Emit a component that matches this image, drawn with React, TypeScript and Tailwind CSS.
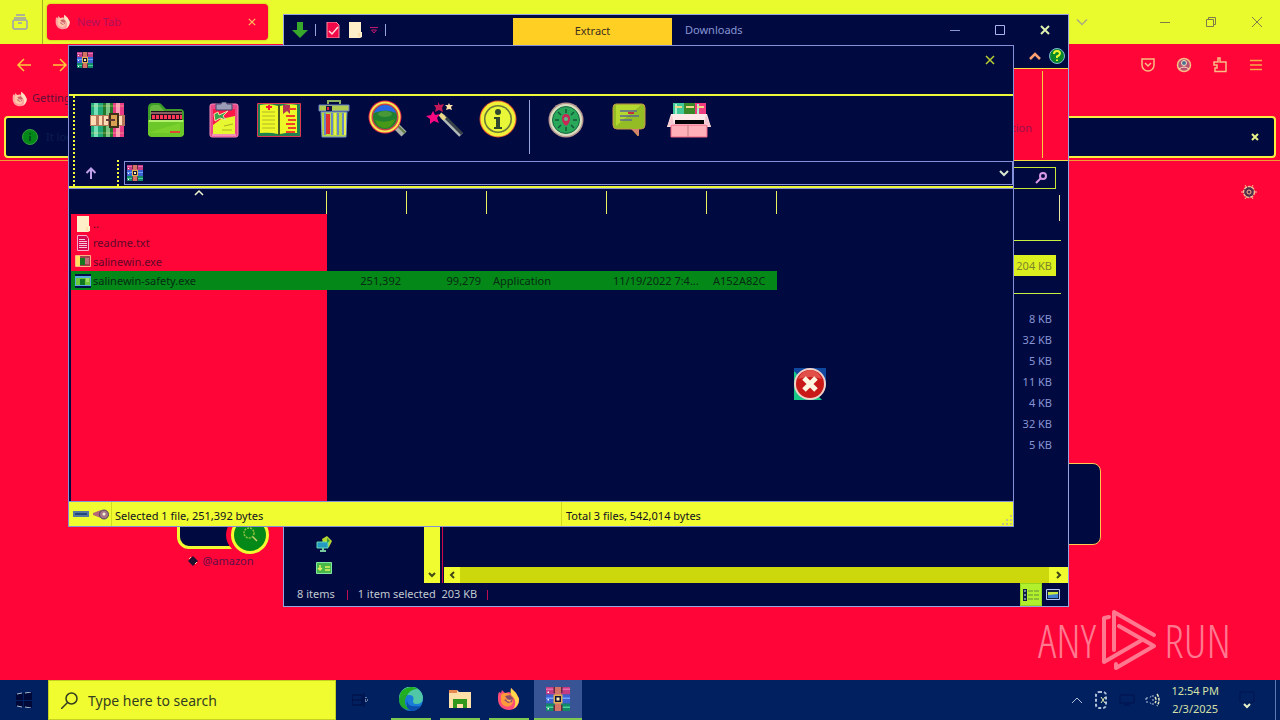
import type { ReactNode } from "react";

type IconProps = { className?: string };

function Svg({ w, h, className = "", children }: { w: number; h: number; className?: string; children: ReactNode }) {
  return (
    <svg width={w} height={h} viewBox={`0 0 ${w} ${h}`} className={`block shrink-0 ${className}`} fill="none" aria-hidden="true">
      {children}
    </svg>
  );
}

function Firefox({ size = 16, pale = false }: { size?: number; pale?: boolean }) {
  return (
    <svg width={size} height={size} viewBox="0 0 24 24" fill="none" className="block shrink-0" aria-hidden="true">
      <path d="M2 5l2 1 1-3 3 3 4-1 2 1V1l5 5 3 5c1 7-4 12-10 12S1 19 1 12c0-3 0-5 1-7z" fill={pale ? "#ffa0a0" : "#ff4c78"} />
      <path d="M14 1l5 5 3 6c0 4-2 8-6 10 3-4 3-9 0-12-2-2-3-4-2-9z" fill={pale ? "#ffe3c0" : "#ffd94a"} />
      <path d="M4 8c3-3 7-2 10 0 3 3 3 9-1 11-5 2-9-2-9-5z" fill={pale ? "#ffc9a8" : "#ff9a3c"} />
      <path d="M8 9l5-1 3 3-1 4-4 1-4-3 3-1z" fill={pale ? "#d06468" : "#8a4a68"} />
      <path d="M9 12l4 1 2-1-2 3-3-1z" fill={pale ? "#ffd8c8" : "#ffb060"} />
    </svg>
  );
}

function Books({ size = 16 }: { size?: number }) {
  return (
    <svg width={size} height={size} viewBox="0 0 16 16" className="block shrink-0" aria-hidden="true">
      <rect width="16" height="5" fill="#c43c84" />
      <rect y="5" width="16" height="6" fill="#3c62d4" />
      <rect y="11" width="16" height="5" fill="#128a68" />
      <path d="M0 1h5v1H0zM11 1h5v1h-5z" fill="#e86cb0" />
      <path d="M0 7h5v1H0zM11 7h5v1h-5z" fill="#72a4ff" />
      <path d="M0 13h5v1H0zM11 13h5v1h-5z" fill="#4cd09c" />
      <path d="M1 3h1v1H1zM1 8h1v1H1zM1 14h1v1H1z" fill="#fff" />
      <rect x="6" width="4" height="16" fill="#d47464" />
      <path d="M5 5h6v6H5z" fill="#e0b050" />
      <path d="M6 6h4v4H6z" fill="#101038" />
      <path d="M7 7h2v2H7z" fill="#fff0b0" />
      <path d="M5 0h1v4H5zM10 0h1v4h-1zM5 12h1v4H5zM10 12h1v4h-1z" fill="#642a44" />
    </svg>
  );
}

const Close = ({ className = "" }: IconProps) => (
  <Svg w={10} h={10} className={className}><path d="M1 1l8 8M9 1L1 9" stroke="currentColor" strokeWidth="1.5" /></Svg>
);
const Down = ({ className = "" }: IconProps) => (
  <Svg w={12} h={8} className={className}><path d="M1 1.500l5 5 5-5" stroke="currentColor" strokeWidth="1.500" /></Svg>
);

function AddIcon() {
  return (
    <Svg w={36} h={36}>
      <rect x="1" y="1" width="12" height="34" fill="#20a878" /><rect x="4" y="1" width="4" height="34" fill="#78e0b8" />
      <rect x="13" y="1" width="10" height="34" fill="#207828" /><rect x="16" y="1" width="4" height="34" fill="#7cc484" />
      <rect x="23" y="1" width="11" height="34" fill="#e83c84" /><rect x="26" y="1" width="4" height="34" fill="#ff9cb8" />
      <path d="M1 4h33M1 31h33" stroke="#f4d884" strokeOpacity=".5" />
      <rect y="13" width="35" height="11" fill="#b8785c" />
      <path d="M1 14h5v9H1zM9 14h3v9H9zM14 14h4v9h-4zM28 14h4v9h-4z" fill="#ffdcb4" />
      <rect x="20" y="12" width="8" height="13" stroke="#3c3018" strokeWidth="2" fill="#d8a050" />
      <path d="M16 18h9" stroke="#603838" strokeWidth="2" />
    </Svg>
  );
}
function ExtractIcon() {
  return (
    <Svg w={38} h={36}>
      <path d="M1 6q0-5 5-5h6q2 0 4 3l3 3h14q4 0 4 4v22H1z" fill="#3c9c28" />
      <path d="M3 7q0-4 4-4h5l6 7v8H3z" fill="#64b840" />
      <rect x="4" y="9" width="31" height="10" fill="#201020" />
      <path d="M4 11h31" stroke="#f0b0a0" />
      <path d="M5 15h30" stroke="#ff3858" strokeWidth="4" strokeDasharray="3 1" />
      <path d="M1 18h36v13q0 4-4 4H5q-4 0-4-4z" fill="#6cc828" />
      <path d="M2 19h34" stroke="#b4f070" strokeWidth="2" />
      <path d="M3 30l30-9v10H4z" fill="#8cdc30" opacity=".5" />
      <path d="M23 30h10" stroke="#e04830" strokeWidth="2" />
    </Svg>
  );
}
function TestIcon() {
  return (
    <Svg w={30} h={36}>
      <rect x="1" y="2" width="28" height="33" rx="2" fill="#e84888" stroke="#ff8cb8" />
      <rect x="4" y="7" width="22" height="25" fill="#e8f830" />
      <path d="M4 7h22v7l-14 3-8 6z" fill="#ff1848" />
      <path d="M7 2h5l1-2h4l1 2h5v6H7z" fill="#9c9cb8" stroke="#404468" />
      <path d="M5 12l4-2 1 3 9-4-5 5 3 4-6-2-5 3z" fill="#38a450" stroke="#ffd8a0" />
      <path d="M15 24l9-2M13 28h10" stroke="#a8b020" />
      <path d="M3 33h24" stroke="#ffd8e8" />
    </Svg>
  );
}
function ViewIcon() {
  return (
    <Svg w={44} h={36}>
      <path d="M.5 1.500h43v33H.5z" fill="#208050" stroke="#e03850" />
      <path d="M3 3q10-2 18 1v28q-8-2-18-1zM23 4q9-3 17-1v28q-9-1-17 1z" fill="#eef828" />
      <path d="M5 10h13M5 14h13M5 18h13M5 22h13M5 26h13" stroke="#b0b820" />
      <path d="M22 3v30" stroke="#485820" strokeWidth="2" />
      <path d="M12 3v5M9 5h6" stroke="#ff1830" strokeWidth="2" />
      <path d="M26 3h7v9l-3-3-4 3z" fill="#b43454" />
      <path d="M32 7h7M29 14h9M31 18h8M29 22h9M31 26h8M29 30h9" stroke="#f04028" strokeWidth="2" />
    </Svg>
  );
}
function DeleteIcon() {
  return (
    <Svg w={32} h={38}>
      <path d="M10 4V1h12v3" stroke="#88b060" strokeWidth="2" />
      <path d="M1 5h30v6H1z" fill="#b0cc50" stroke="#6880c8" />
      <path d="M8 6h6v5H8z" fill="#101440" /><path d="M9 7h2v3H9z" fill="#e82848" />
      <path d="M3 12h26l-1 25H4z" fill="#b8d840" stroke="#7090d0" />
      <path d="M7 13v22M14 13v22M20 13v22M25 13v22" stroke="#6888c8" strokeWidth="2" />
      <path d="M10 14v20" stroke="#e03030" strokeWidth="4" /><path d="M17 13v22M27 13v22" stroke="#e8f050" strokeWidth="2" />
    </Svg>
  );
}
function FindIcon() {
  return (
    <Svg w={40} h={38}>
      <path d="M27 25l9 9" stroke="#a8b0a8" strokeWidth="7" /><path d="M28 24l9 9" stroke="#608048" strokeWidth="2" />
      <circle cx="17" cy="17" r="16.500" fill="#e82848" /><circle cx="17" cy="17" r="15.500" fill="#f8e850" />
      <circle cx="17" cy="17" r="13.500" fill="#d04048" /><circle cx="17" cy="17" r="12" fill="#208030" />
      <path d="M6 13q3-8 11-8t11 8q-10-5-22 0z" fill="#2868e8" /><path d="M7 20q10 4 20-1-3 9-10 9t-10-8z" fill="#489818" />
      <ellipse cx="17" cy="14" rx="7" ry="3" fill="#489838" />
    </Svg>
  );
}
function WizardIcon() {
  return (
    <Svg w={38} h={36}>
      <path d="M16 14L35 33" stroke="#b0b8b8" strokeWidth="5" /><path d="M18 14l18 18" stroke="#384048" strokeWidth="3" />
      <path d="M14 12l5 5" stroke="#e8d888" strokeWidth="4" />
      <path d="M7 9l2 4 5-1-3 4 2 5-5-2-4 3v-5l-4-3 5-1z" fill="#f80880" />
      <path d="M12 0l2 3 4-1-2 4 1 4-4-2-4 2 1-4-2-3h4z" fill="#c41858" />
      <path d="M23 1l1 2h3l-2 2 1 3-3-1-3 1 1-3-2-2h3z" fill="#ffe0a8" />
    </Svg>
  );
}
function InfoIcon() {
  return (
    <Svg w={38} h={38}>
      <circle cx="19" cy="19" r="18.500" fill="#e85830" /><circle cx="19" cy="19" r="17.500" fill="#f0f038" />
      <circle cx="19" cy="19" r="14" fill="#687838" /><circle cx="19" cy="19" r="12.500" fill="#e8f838" />
      <circle cx="19" cy="12" r="3" fill="#304830" /><path d="M15 17h6v10h2v2h-8v-2h2v-8h-2z" fill="#304830" />
    </Svg>
  );
}
function ScanIcon() {
  return (
    <Svg w={36} h={36}>
      <circle cx="18" cy="18" r="17.500" fill="#b89890" /><circle cx="18" cy="18" r="16" fill="#d8e0c0" />
      <circle cx="18" cy="18" r="13.500" fill="#28a858" stroke="#186848" />
      <path d="M18 7v4M18 25v4M7 18h4M25 18h4M10 10l3 3M26 10l-3 3M10 26l3-3M26 26l-3-3" stroke="#105838" strokeWidth="1.500" />
      <path d="M14 17q0-5 4-5t4 5q0 4-4 7-4-3-4-7z" fill="#c82858" /><circle cx="18" cy="17" r="2" fill="#60b888" />
    </Svg>
  );
}
function CommentIcon() {
  return (
    <Svg w={34} h={36}>
      <path d="M4 2h26q3 0 3 4v17q0 4-4 4h-3v7l-6-7H5q-4 0-4-4V6q0-4 3-4z" fill="#94bc24" stroke="#c89848" />
      <path d="M4 3h25L4 24z" fill="#b4d830" /><path d="M19 27h8v7z" fill="#d88070" />
      <path d="M8 9h17M8 14h19M8 18h12" stroke="#586890" strokeWidth="1.500" /><path d="M16 11h6" stroke="#c83038" strokeWidth="2" />
    </Svg>
  );
}
function SfxIcon() {
  return (
    <Svg w={44} h={36}>
      <rect x="6" y="1" width="11" height="15" fill="#40c898" /><rect x="17" y="1" width="11" height="15" fill="#388828" /><rect x="28" y="1" width="11" height="15" fill="#f03c80" />
      <path d="M9 2v10M31 2v10" stroke="#a8f0d0" strokeWidth="2" /><path d="M8 5h7M19 5h8M30 5h7" stroke="#f0d888" strokeWidth="2" />
      <path d="M4 12h36l4 13H0z" fill="#ffe8e8" /><path d="M8 18h29v4H8z" fill="#040408" />
      <path d="M4 23h36v12H4z" fill="#ffb0b8" stroke="#f06080" /><path d="M0 25l5-12 2 9zM44 25l-5-12-2 9z" fill="#f8c8d0" />
      <path d="M21 23v12" stroke="#c08088" />
    </Svg>
  );
}

const FilePage = () => <Svg w={14} h={16}><path d="M1 0h12v10h1v5l-2 1H1z" fill="#ffefc8" /><path d="M11 11v4" stroke="#ffd090" /></Svg>;
const TextFile = () => <Svg w={14} h={16}><path d="M1.500.5h9l2 3v12h-11z" fill="#d80850" stroke="#f4b0cc" /><path d="M3 4.500h6M3 6.500h8M3 8.500h8M3 10.500h8M3 12.500h8" stroke="#f8c8d8" /></Svg>;
const ExeRed = () => <Svg w={16} h={13}><path d="M.5.5h15v11H.5z" fill="#a04050" stroke="#ffb080" /><path d="M1 1h4v10H1z" fill="#ffe060" /><path d="M5 3h5v7H5z" fill="#187820" /><path d="M10 4h4M10 6h4M10 8h4" stroke="#e098a0" /></Svg>;
const ExeGreen = () => <Svg w={16} h={14}><path d="M0 0h16v14H0z" fill="#00104a" /><path d="M0 2h16v10H0z" fill="#58a8e0" /><path d="M1 4h14v7H1z" fill="#6cc838" /><path d="M5 5h5v6H5z" fill="#107820" /><path d="M11 5h3M11 7h3" stroke="#d0f090" /></Svg>;

function Browser() {
  return (
    <main className="absolute inset-0 flex flex-col bg-[#ff0538] text-[#8c1240]">
      <header className="flex h-11 shrink-0 items-center bg-[#e9fb2d] text-[#7c7c48]">
        <button aria-label="Recent browsing" className="flex h-full w-[43px] items-center justify-center border-r border-[#a0b020] pr-0.5 text-[#9a9cb4]">
          <Svg w={16} h={16}><path d="M4 1h9M2 4h12" stroke="currentColor" strokeWidth="1.500" /><rect x="1" y="6" width="14" height="9" rx="1.500" stroke="currentColor" strokeWidth="1.500" /><path d="M6 9h4" stroke="currentColor" strokeWidth="1.500" /></Svg>
        </button>
        <div className="ml-1 flex h-9 w-[221px] items-center rounded bg-[#ff0538] px-2 shadow-[0_0_2px_#c09020]">
          <Firefox pale />
          <span className="ml-1.5 flex-1 text-[11px] text-[#b01058]">New Tab</span>
          <button aria-label="Close tab" className="mr-1 text-[#ffc060]"><Close className="h-2 w-2" /></button>
        </div>
        <div className="ml-auto flex items-center">
          <button aria-label="List tabs" className="mr-[54px] text-[#a8ac80]"><Down /></button>
          <button aria-label="Minimize" className="flex w-[46px] justify-center"><Svg w={10} h={10}><path d="M0 5.500h10" stroke="currentColor" /></Svg></button>
          <button aria-label="Restore" className="flex w-[46px] justify-center"><Svg w={10} h={10}><path d="M.5 2.500h7v7h-7zM2.500 2.500v-2h7v7h-2" stroke="currentColor" /></Svg></button>
          <button aria-label="Close" className="flex w-[46px] justify-center"><Svg w={10} h={10}><path d="M0 0l10 10M10 0L0 10" stroke="currentColor" /></Svg></button>
        </div>
      </header>
      <nav className="flex h-[41px] shrink-0 items-center px-4 text-[#ffc83c]">
        <button aria-label="Back"><Svg w={16} h={16}><path d="M15 8H2M8 2L2 8l6 6" stroke="currentColor" strokeWidth="1.500" /></Svg></button>
        <button aria-label="Forward" className="ml-5"><Svg w={16} h={16}><path d="M1 8h13M8 2l6 6-6 6" stroke="currentColor" strokeWidth="1.500" /></Svg></button>
        <div className="ml-auto flex gap-5 text-[#f8bc84]">
          <button aria-label="Save to Pocket"><Svg w={16} h={16}><path d="M2 2h12v6a6 6 0 0 1-12 0z" stroke="currentColor" strokeWidth="1.500" /><path d="M5 6l3 3 3-3" stroke="currentColor" strokeWidth="1.500" /></Svg></button>
          <button aria-label="Account"><Svg w={16} h={16}><circle cx="8" cy="8" r="6.500" stroke="currentColor" strokeWidth="1.500" fill="#b85070" /><circle cx="8" cy="6" r="2.500" stroke="#ffe0c0" fill="#487090" /><path d="M3 12q5-4 10 0" stroke="#ffe0c0" /></Svg></button>
          <button aria-label="Extensions"><Svg w={16} h={16}><path d="M3 14.500v-3.500h2V8H2V5h4V1h2v4h6v9.500z" stroke="currentColor" strokeWidth="1.500" /></Svg></button>
          <button aria-label="Menu"><Svg w={16} h={16}><path d="M2 3.500h12M2 8h12M2 12.500h12" stroke="#f8a848" strokeWidth="1.500" /></Svg></button>
        </div>
      </nav>
      <div className="flex h-[31px] shrink-0 items-center pb-1 pl-3 text-[11px] text-[#601038]"><Firefox pale /><a href="#started" className="ml-1">Getting Started</a></div>
      <div className="mx-1 flex h-[42px] shrink-0 items-center rounded border-2 border-[#f8f040] bg-[#000a40] pl-4 pr-[15px] text-[11px] text-[#0c1c50]">
        <Svg w={16} h={16}><circle cx="8" cy="8" r="7.500" fill="#048818" stroke="#38a040" /><path d="M8 4v1.500M8 7v5" stroke="#06401c" strokeWidth="1.500" /></Svg>
        <span className="ml-2 flex-1">It looks like you haven’t started Firefox in a while.</span>
        <button aria-label="Dismiss" className="text-[#e8f088]"><Svg w={8} h={8}><path d="M1 1l6 6M7 1L1 7" stroke="currentColor" strokeWidth="2" /></Svg></button>
      </div>
      <div className="mt-0.5 h-px shrink-0 bg-[#f0a030]" />
      <div className="relative flex-1">
        <button aria-label="Personalize" className="absolute right-[23px] top-[23px] text-[#f8b890]">
          <Svg w={16} h={16}><circle cx="8" cy="8" r="5.500" fill="#50304c" stroke="currentColor" strokeWidth="1.500" strokeDasharray="3 1" /><circle cx="8" cy="8" r="2" stroke="currentColor" /><path d="M0 8h3M13 8h3M4 1l2 3M12 1l-2 3M4 15l2-3M12 15l-2-3" stroke="currentColor" /></Svg>
        </button>
        <div className="absolute left-[901px] top-[302px] h-[82px] w-[200px] rounded-lg border border-[#ffc850] bg-[#000a40]" />
        <div className="absolute left-[177px] top-[308px] flex flex-col items-center">
          <div className="relative h-20 w-[82px] rounded-xl border-[3px] border-[#f0fc30] bg-[#000a40]">
            <div className="absolute -bottom-2 -right-[13px] flex h-[38px] w-[38px] items-center justify-center rounded-full border-[3px] border-[#f0fc30] bg-[#048818] shadow-[-5px_0_0_#ff0538]">
              <Svg w={16} h={16}><circle cx="7" cy="6" r="5" stroke="#90c040" strokeWidth="1.500" strokeDasharray="2 1" /><path d="M11 10l4 4" stroke="#d0d070" strokeWidth="1.500" /></Svg>
            </div>
          </div>
          <a href="#amazon" className="ml-1.5 mt-1 flex items-center gap-1 text-[11px] text-[#601048]">
            <Svg w={10} h={10}><path d="M5 0l5 5-5 5-5-5z" fill="#201030" /><path d="M1 3l2-2M7 8l2-2" stroke="#f8d0a0" /></Svg>@amazon
          </a>
        </div>
      </div>
    </main>
  );
}

const sizes = ["8 KB", "32 KB", "5 KB", "11 KB", "4 KB", "32 KB", "5 KB"];

function Explorer() {
  return (
    <section aria-label="Downloads" className="absolute left-[283px] top-[14px] flex h-[593px] w-[786px] flex-col border border-[#98a4e0] bg-[#000a40] text-[#8894d4]">
      <header className="flex h-[30px] shrink-0 items-center pl-2">
        <Svg w={16} h={16}><path d="M5 0h6v8h5l-8 8-8-8h5z" fill="#38a82c" /></Svg>
        <span className="ml-[7px] h-3 w-px bg-[#98a4e0]" />
        <button aria-label="Properties" className="ml-2.5"><Svg w={14} h={16}><path d="M1 0h9l3 3v13H1z" fill="#f00848" stroke="#ff90a8" /><path d="M3 9l3 3 6-7" stroke="#ffd8d8" strokeWidth="1.500" /></Svg></button>
        <button aria-label="New folder" className="ml-2"><FilePage /></button>
        <button aria-label="Customize toolbar" className="ml-2 text-[#c01870]"><Svg w={8} h={8}><path d="M0 1.500h8M1.500 4L4 7l2.500-3z" stroke="currentColor" /></Svg></button>
        <span className="ml-[7px] h-3 w-px bg-[#98a4e0]" />
        <button className="ml-[127px] h-[27px] w-[159px] self-end bg-[#ffcf24] text-[11px] text-[#3c3020]">Extract</button>
        <h1 className="ml-[13px] flex-1 text-[11px]">Downloads</h1>
        <button aria-label="Minimize" className="flex w-[45px] justify-center"><Svg w={10} h={10}><path d="M0 5.500h10" stroke="currentColor" /></Svg></button>
        <button aria-label="Maximize" className="flex w-[45px] justify-center"><Svg w={10} h={10}><path d="M.5.5h9v9h-9z" stroke="#a8b4f0" /></Svg></button>
        <button aria-label="Close" className="flex w-[46px] justify-center text-[#e0f0b0]"><Svg w={10} h={10}><path d="M1 1l8 8M9 1L1 9" stroke="currentColor" strokeWidth="2" /></Svg></button>
      </header>
      <div className="flex h-[23px] shrink-0 items-center justify-end gap-2 pb-0.5 pr-[3px]">
        <button aria-label="Collapse ribbon"><Svg w={12} h={8}><path d="M1 7l5-5 5 5" stroke="#ffa070" strokeWidth="2.500" /></Svg></button>
        <button aria-label="Help"><Svg w={16} h={16}><circle cx="8" cy="8" r="7.500" fill="#088828" stroke="#80b8d8" /><path d="M5 6q0-3 3-3t3 2.500q0 1.500-3 3V10M8 11.500V13" stroke="#e8f830" strokeWidth="2" /></Svg></button>
      </div>
      <div className="flex h-[93px] shrink-0 items-center justify-end border-y border-[#f4e040] bg-[#ff0538] py-0.5 pr-[25px]">
        <span className="mr-2.5 mt-[28px] text-[11px] text-[#98104c]">Navigation</span>
        <span className="h-full w-px bg-[#f4d040]" />
      </div>
      <div className="flex h-[34px] shrink-0 items-start justify-end pr-3 pt-1.5">
        <label className="flex h-[22px] w-44 items-center border border-[#c8e838] pr-2">
          <input aria-label="Search Downloads" className="w-full bg-transparent" />
          <Svg w={12} h={12}><circle cx="8" cy="4" r="3" stroke="#d898e8" strokeWidth="2" /><path d="M6 6l-5 5" stroke="#d898e8" strokeWidth="2" /></Svg>
        </label>
      </div>
      <div className="flex min-h-0 flex-1">
        <div className="flex w-[140px] flex-col items-center justify-end gap-2.5 pb-[9px] pr-[60px]">
          <Svg w={16} h={16}><path d="M6 3l5-3 5 5-3 6H8z" fill="#b8d830" /><path d="M1 6h11v6H1z" fill="#2498c0" stroke="#60d8b0" /><path d="M4 15h6M7 12v3" stroke="#78c8a0" strokeWidth="2" /><path d="M11 2l3 3-3 2z" fill="#38983c" /></Svg>
          <Svg w={16} h={12}><path d="M.5.5h15v11H.5z" fill="#48b848" stroke="#80e8a0" /><path d="M4 3v4M2 6l2 2 2-2M9 5h5M9 8h5" stroke="#e0f060" strokeWidth="1.500" /></Svg>
        </div>
        <div className="flex w-4 flex-col justify-end bg-[#f0fc30] text-[#404818]"><button aria-label="Scroll down" className="flex h-4 items-center justify-center"><Svg w={8} h={8}><path d="M1 2l3 3 3-3" stroke="currentColor" strokeWidth="2" /></Svg></button></div>
        <div className="ml-0.5 flex min-w-0 flex-1 flex-col border-l border-[#d00848]">
          <div className="mr-2 h-[26px] shrink-0 border-r border-[#e8e8a0]" />
          <div className="mr-[7px] mt-[19px] border-t border-[#c8f040]" />
          <ul className="mr-3 mt-3.5 text-right text-[11px] leading-[21px]">
            <li className="bg-[#dcf020] pr-1 text-[#7c8428]">204 KB</li>
          </ul>
          <div className="mr-[7px] mt-[17px] border-t border-[#c8f040]" />
          <ul className="mr-3 mt-3.5 flex-1 text-right text-[11px] leading-[21px]">
            {sizes.map((s, i) => <li key={i} className="pr-1">{s}</li>)}
          </ul>
          <div className="ml-px flex h-4 shrink-0 items-center bg-[#f0fc30] text-[#404818]">
            <button aria-label="Scroll left" className="flex h-4 w-4 items-center justify-center"><Svg w={8} h={8}><path d="M6 1L3 4l3 3" stroke="currentColor" strokeWidth="2" /></Svg></button>
            <div className="h-full flex-1 bg-[#ccd80c]" />
            <button aria-label="Scroll right" className="flex h-4 w-[19px] items-center justify-center"><Svg w={8} h={8}><path d="M2 1l3 3-3 3" stroke="currentColor" strokeWidth="2" /></Svg></button>
          </div>
        </div>
      </div>
      <footer className="flex h-[23px] shrink-0 items-center pl-[13px] text-[11px] text-[#c0c8d0]">
        <span>8 items</span>
        <span className="ml-3 h-2.5 w-px bg-[#c00c50]" />
        <span className="ml-2.5 whitespace-pre">1 item selected  203 KB</span>
        <span className="ml-2.5 h-2.5 w-px bg-[#c00c50]" />
        <button aria-label="Details view" className="ml-auto flex h-full w-[22px] items-center justify-center border border-[#90d820] bg-[#b0f02c]"><Svg w={16} h={14}><path d="M0 1h4v4H0zM0 5h4v4H0zM0 9h4v4H0z" fill="#101c48" /><path d="M1 3h2M1 7h2M1 11h2" stroke="#d8f0f0" /><path d="M5 3h5M11 3h5M5 7h5M11 7h5M5 11h5M11 11h5" stroke="#688c38" /></Svg></button>
        <button aria-label="Thumbnail view" className="ml-1 mr-2"><Svg w={14} h={11}><path d="M.5.5h13v10H.5z" fill="#102040" stroke="#b8c8ff" /><path d="M2 3h10v3H2z" fill="#c8e840" /><path d="M2 6l10-1v4H2z" fill="#4080d0" /></Svg></button>
      </footer>
    </section>
  );
}

type Row = { icon: ReactNode; name: string; cells?: string[] };
const rows: Row[] = [
  { icon: <FilePage />, name: ".." },
  { icon: <TextFile />, name: "readme.txt" },
  { icon: <ExeRed />, name: "salinewin.exe" },
  { icon: <ExeGreen />, name: "salinewin-safety.exe", cells: ["251,392", "99,279", "Application", "11/19/2022 7:4...", "A152A82C"] },
];
const headings = ["Name", "Size", "Packed", "Type", "Modified", "CRC32"];

function Archive() {
  return (
    <section aria-label="Archive" className="absolute left-[68px] top-[45px] flex h-[482px] w-[946px] flex-col border border-[#8490d8] bg-[#000a40] text-[11px]">
      <header className="flex h-12 shrink-0 items-start justify-between pl-2 pr-[18px] pt-1.5">
        <Books />
        <button aria-label="Close" className="mt-[3px] text-[#b8d030]"><Close /></button>
      </header>
      <div className="flex h-[94px] shrink-0 border-y-2 border-[#ecf838]">
        <div className="ml-1 border-l-2 border-dotted border-[#f0f838]" />
        <div className="flex min-w-0 flex-1 flex-col">
          <div className="flex h-16 items-start pl-[15px] pt-1">
            <button aria-label="Add" className="mt-0.5"><AddIcon /></button>
            <button aria-label="Extract To" className="ml-[21px] mt-0.5"><ExtractIcon /></button>
            <button aria-label="Test" className="ml-6 mt-0.5"><TestIcon /></button>
            <button aria-label="View" className="ml-[18px] mt-0.5"><ViewIcon /></button>
            <button aria-label="Delete" className="ml-[17px]"><DeleteIcon /></button>
            <button aria-label="Find" className="ml-[18px]"><FindIcon /></button>
            <button aria-label="Wizard" className="ml-[18px] mt-0.5"><WizardIcon /></button>
            <button aria-label="Info" className="ml-[15px]"><InfoIcon /></button>
            <span className="ml-[12px] h-[54px] w-px bg-[#98a4e0]" />
            <button aria-label="VirusScan" className="ml-[18px] mt-0.5"><ScanIcon /></button>
            <button aria-label="Comment" className="ml-7 mt-0.5"><CommentIcon /></button>
            <button aria-label="SFX" className="ml-[21px] mt-0.5"><SfxIcon /></button>
          </div>
          <div className="flex flex-1 items-stretch">
            <button aria-label="Up one level" className="flex w-[42px] items-center pl-[10px] text-[#c0a0e8]"><Svg w={12} h={12}><path d="M6 12V2M1.500 6L6 1.500 10.500 6" stroke="currentColor" strokeWidth="2" /></Svg></button>
            <div className="border-l-2 border-dotted border-[#f0f838]" />
            <label className="my-px ml-[5px] flex flex-1 items-center border border-[#8490d8] pl-0.5 pr-[3px]">
              <Books />
              <input aria-label="Archive path" className="h-4 flex-1 bg-transparent" />
              <span className="text-[#d8e8d0]"><Svg w={10} h={8}><path d="M1 2l4 4 4-4" stroke="currentColor" strokeWidth="2" /></Svg></span>
            </label>
          </div>
        </div>
      </div>
      <div className="min-h-0 flex-1 border-t border-[#8490d8] bg-[linear-gradient(#ff0538,#ff0538)] bg-[length:256px_100%] bg-[position:2px_0] bg-no-repeat">
        <table className="ml-0.5 w-[706px] table-fixed border-collapse text-left leading-[19px]">
          <colgroup><col className="w-[256px]" /><col className="w-20" /><col className="w-20" /><col className="w-[120px]" /><col className="w-[100px]" /><col className="w-[70px]" /></colgroup>
          <thead>
            <tr className="h-[25px] bg-[#000a40]">
              {headings.map((h, i) => (
                <th key={h} aria-label={h} className="relative p-0 align-top">
                  <span className="absolute bottom-0 right-0 top-0.5 w-px bg-[#e8f060]" />
                  {i === 0 && <Svg w={10} h={8} className="mx-auto"><path d="M1 6l4-4 4 4" stroke="#f0f8d0" strokeWidth="1.500" /></Svg>}
                </th>
              ))}
            </tr>
          </thead>
          <tbody>
            {rows.map((r) => (
              <tr key={r.name} className={r.cells ? "h-[19px] bg-[#048818] text-[#062c14]" : "h-[19px] text-[#600828]"}>
                <td className="p-0"><div className="flex h-[19px] items-center gap-0.5 pl-1"><span className="flex w-4 justify-center">{r.icon}</span>{r.name}</div></td>
                {r.cells?.map((c, i) => <td key={c} className={i < 2 ? "px-1.5 py-0 text-right" : "overflow-hidden whitespace-nowrap py-0 pl-1.5"}>{c}</td>)}
              </tr>
            ))}
          </tbody>
        </table>
      </div>
      <footer className="relative flex h-[25px] shrink-0 items-center border-t border-[#8490d8] bg-[#f0fc30] text-[#101020]">
        <div className="flex w-[42px] items-center gap-1 self-stretch pl-1">
          <Svg w={16} h={8}><path d="M0 1h16v6H0z" fill="#5478a0" /><path d="M2 3h12v2H2z" fill="#244878" /></Svg>
          <Svg w={16} h={11}><path d="M0 4l8-3v8L0 6z" fill="#b46878" /><circle cx="11" cy="5.500" r="4.500" fill="#a87888" stroke="#504060" /><circle cx="11" cy="5" r="1.500" fill="#f8f8d0" /></Svg>
        </div>
        <p className="flex w-[451px] items-center self-stretch border-x border-[#d0dc20] pl-[3px] pt-1">Selected 1 file, 251,392 bytes</p>
        <p className="pl-1 pt-1">Total 3 files, 542,014 bytes</p>
        <Svg w={12} h={12} className="absolute bottom-0 right-0"><path d="M9 1h2v2H9zM5 5h2v2H5zM9 5h2v2H9zM1 9h2v2H1zM5 9h2v2H5zM9 9h2v2H9z" fill="#c4c484" /></Svg>
      </footer>
    </section>
  );
}

function Watermark() {
  return (
    <div className="absolute bottom-2 right-[49px] flex h-[64px] items-center gap-1.5 font-['Open_Sans_Condensed_Light','Roboto_Condensed_Light','Roboto_Condensed','Liberation_Sans_Narrow',sans-serif] text-[46px] font-light leading-none text-[#ff7890]">
      <span>ANY</span>
      <Svg w={56} h={62}>
        <g stroke="#ff7890" strokeWidth="4" strokeLinecap="round" strokeLinejoin="round">
          <path d="M12 41V3l40 23M17 17l35 20L14 59v-4" /><path d="M7 8L2 9v44l38-22" />
        </g>
      </Svg>
      <span>RUN</span>
    </div>
  );
}

function Taskbar() {
  return (
    <footer className="flex h-10 shrink-0 items-center bg-[#002060]">
      <button aria-label="Start" className="flex h-full w-12 items-center justify-center"><Svg w={16} h={16}><path d="M0 2l7-1v7H0zM8 1l8-1v8H8zM0 9h7v6l-7-1zM8 9h8v7l-8-1z" fill="#000838" /><path d="M1 2l5-1M9 1l6-1M1 14l5 1M9 15l6 1" stroke="#a8b8d0" /></Svg></button>
      <label className="flex h-full w-[288px] items-center border border-[#c4d020] bg-[#f0fc30] pl-3 text-[#343c20]">
        <Svg w={17} h={17}><circle cx="10.500" cy="6.500" r="5.500" stroke="currentColor" strokeWidth="1.500" /><path d="M6.500 10.500L0 17" stroke="currentColor" strokeWidth="1.500" /></Svg>
        <input aria-label="Search" placeholder="Type here to search" className="ml-2.5 w-full bg-transparent text-[14px] outline-none placeholder:text-[#343c20]" />
      </label>
      <button aria-label="Task view" className="ml-4 mr-[23px] flex w-4 justify-center"><Svg w={16} h={16}><path d="M0 3h10v10H0zM0 8h10M12 1v14" stroke="#000c40" /><path d="M14 5v2M13 8h3M14 9v2" stroke="#d8d8e0" strokeDasharray="1 1" /></Svg></button>
      <button aria-label="Edge" className="flex h-full w-10 items-center justify-center border-b-2 border-[#7cc850]"><Svg w={24} h={24}>
        <circle cx="12" cy="12" r="12" fill="#187cd8" /><path d="M0 12A12 12 0 0 1 24 11q0 6-7 6-3 0-3-3 2-6-4-6Q2 8 0 12z" fill="#50c8a8" /><path d="M0 12Q1 1 12 0q4 0 7 2-7 0-10 5-6 0-9 5z" fill="#20b020" /><path d="M7 10q-4 9 6 13Q0 23 0 12q2-5 9-5z" fill="#20a828" /><path d="M8 12q-1 9 14 7-4 5-10 5-6-3-4-12z" fill="#0c50b0" />
      </Svg></button>
      <button aria-label="File Explorer" className="ml-[9px] flex h-full w-10 items-center justify-center border-b-2 border-[#7cc850]"><Svg w={22} h={20}><path d="M0 1h8l2 2h12v16H0z" fill="#ffe0a8" /><path d="M0 1h8v3H0z" fill="#e88850" /><path d="M4 19v-9h14v9h-4v-4H8v4z" fill="#30981c" /></Svg></button>
      <button aria-label="Firefox" className="ml-[9px] flex h-full w-10 items-center justify-center border-b-2 border-[#7cc850]"><Firefox size={24} /></button>
      <button aria-label="WinRAR" className="ml-[5px] flex h-full w-12 items-center justify-center border-b-2 border-[#7cc850] bg-[#385494]"><Books size={24} /></button>
      <div className="ml-auto flex h-full items-center text-[#b0c0d8]">
        <button aria-label="Show hidden icons"><Svg w={12} h={8}><path d="M1 7l5-5 5 5" stroke="currentColor" /></Svg></button>
        <span className="ml-3"><Svg w={12} h={18}><rect x="1" y="1" width="10" height="16" rx="3" stroke="currentColor" strokeWidth="2" strokeDasharray="3 2" /><path d="M6 6l4 6M10 6l-4 6" stroke="#e8f0b0" /></Svg></span>
        <span className="ml-3"><Svg w={16} h={12}><path d="M1 1h14v8H1zM5 11h6" stroke="#00124c" /></Svg></span>
        <span className="ml-2.5"><Svg w={16} h={14}><path d="M1 5h3l4-3v10l-4-3H1z" stroke="currentColor" strokeDasharray="2 2" /><path d="M10 4q2 3 0 6M12 1q4 6 0 12" stroke="#e0e8c0" strokeWidth="1.500" strokeDasharray="3 1" /></Svg></span>
        <p className="ml-2.5 text-center text-[11px] leading-[18px] text-[#d4e0a8]">12:54 PM<br />2/3/2025</p>
        <button aria-label="Notifications" className="ml-5 mr-5 text-[#e8f0c8]"><Svg w={16} h={18}><path d="M1 1h14v10H1z" stroke="#001450" /><path d="M5 13l3 3 3-3" stroke="currentColor" strokeWidth="2" /></Svg></button>
        <span className="mr-1 h-full w-px bg-[#6078b0]" />
      </div>
    </footer>
  );
}

export default function App() {
  return (
    <div className="flex h-screen w-full flex-col overflow-hidden bg-[#ff0538] font-['Noto_Sans','Open_Sans',sans-serif]">
      <div className="relative min-h-0 flex-1 overflow-hidden">
        <Browser />
        <Explorer />
        <Archive />
        <Svg w={32} h={32} className="absolute left-[794px] top-[368px]">
          <path d="M0 0h32v18L18 32H0z" fill="#1048a0" /><path d="M0 3v29h28z" fill="#18c888" />
          <circle cx="16" cy="16" r="16" fill="#f0d0c8" /><circle cx="16" cy="16" r="14" fill="#c81818" /><path d="M4 11q4-9 12-9t12 9q-12-4-24 0z" fill="#e05048" />
          <path d="M10 10l12 12M22 10L10 22" stroke="#fff4e0" strokeWidth="5" />
        </Svg>
        <Watermark />
      </div>
      <Taskbar />
    </div>
  );
}
